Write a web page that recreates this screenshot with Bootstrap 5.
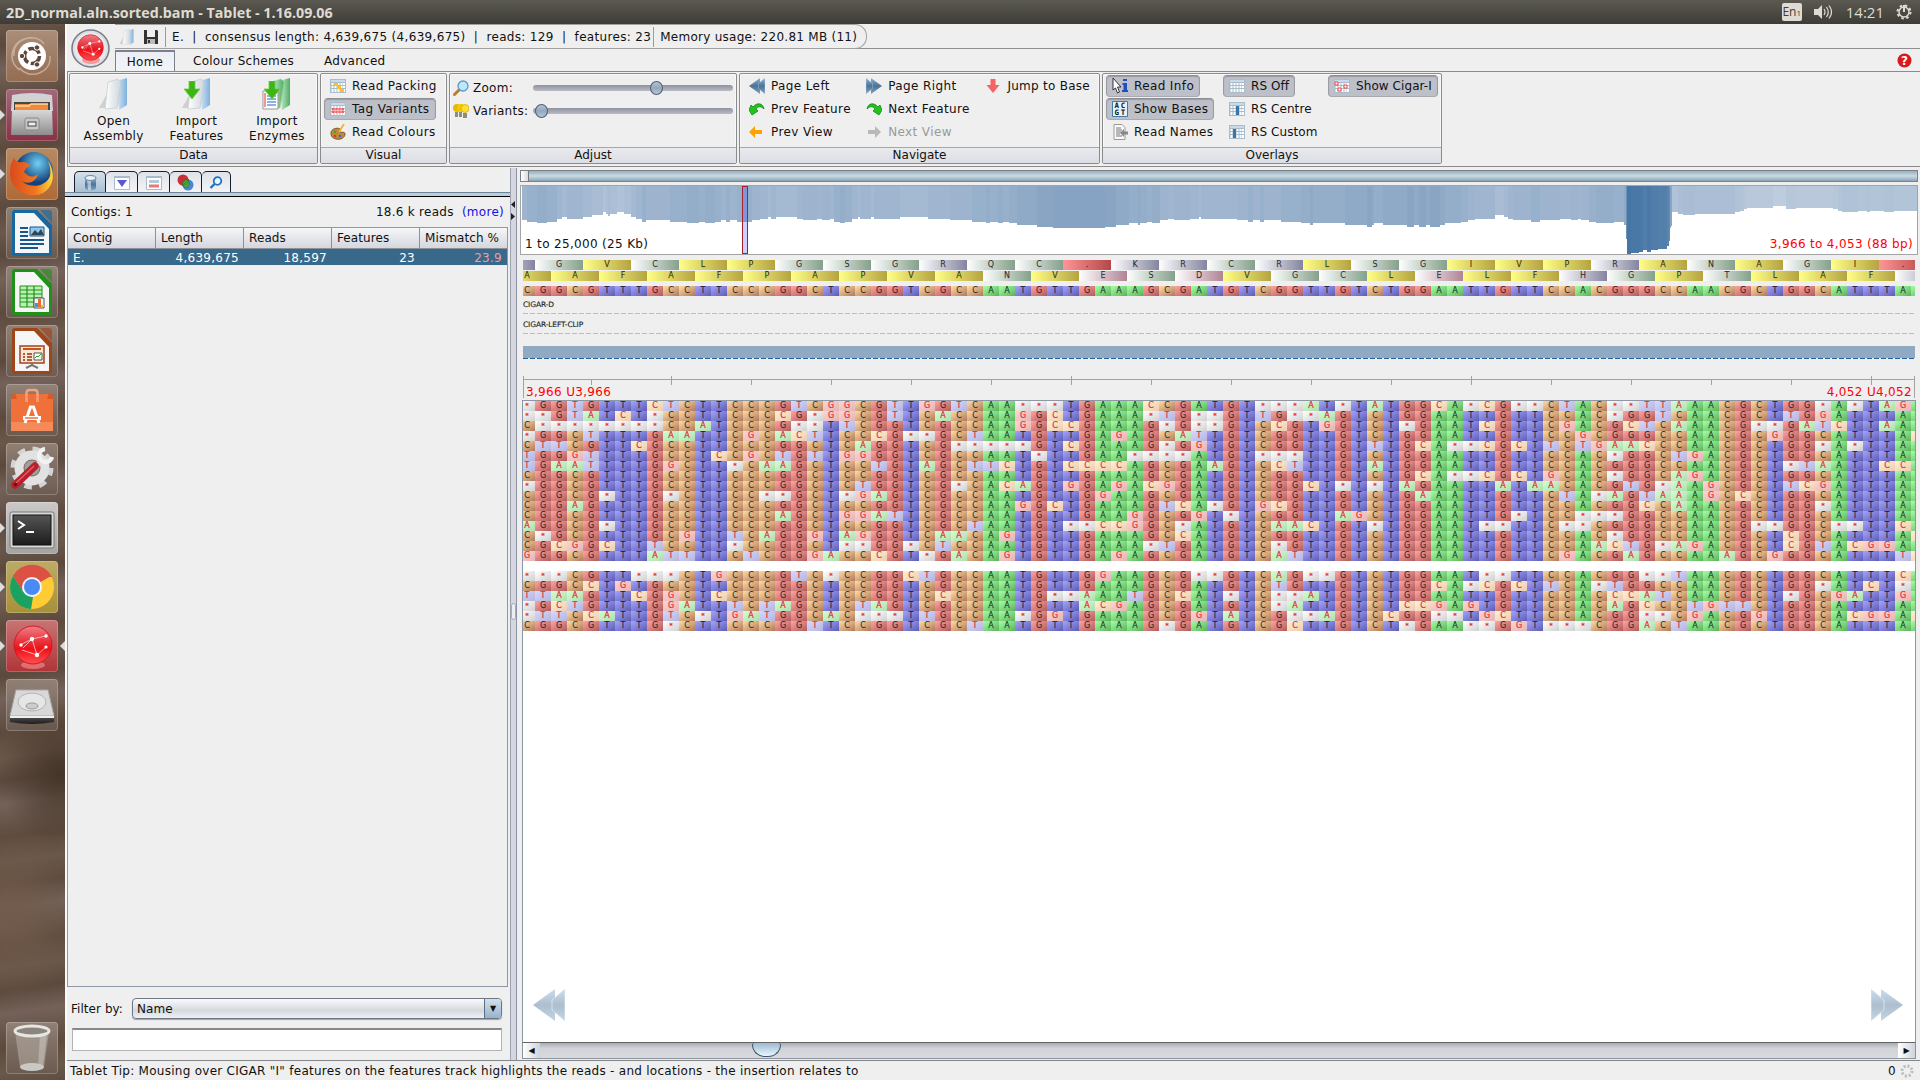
<!DOCTYPE html>
<html lang="en">
<head>
<meta charset="utf-8">
<title>2D_normal.aln.sorted.bam - Tablet - 1.16.09.06</title>
<link href="https://cdn.jsdelivr.net/npm/bootstrap@5.3.0/dist/css/bootstrap.min.css" rel="stylesheet">
<script src="https://cdn.jsdelivr.net/npm/bootstrap@5.3.0/dist/js/bootstrap.bundle.min.js"></script>
<style>
body{width:1920px;height:1080px;overflow:hidden;background:#efefef;color:#111;font:12px/16px "DejaVu Sans",sans-serif;letter-spacing:.27px}
svg{display:block;flex:none}
.topbar{height:24px;background:linear-gradient(#5b5951,#3d3c37);color:#dfdbd2;font:15px/24px "Open Sans",sans-serif;letter-spacing:0;padding:0 8px 0 6px}
.topbar b{font-size:15px;transform:scaleX(.951);transform-origin:left;white-space:pre}
.lang{width:20px;height:18px;background:#dfdbd2;color:#3c3b37;border-radius:2px;font-size:12px;line-height:17px}
.lang small{font-size:8px}
.launcher{width:65px;gap:7px;padding:6px 0 6px 6px;background:radial-gradient(ellipse 70px 90px at 10px 890px,#715b4b 0,transparent 100%),radial-gradient(ellipse 60px 70px at 60px 750px,#453528 0,transparent 100%),repeating-linear-gradient(172deg,#69574a 0,#5b493d 22px,#74625a 45px,#5d4a3d 78px,#6a584b 104px)}
.tile{width:52px;height:52px;border-radius:4px;position:relative;background:linear-gradient(#9a8b80cc,#6c5b50cc);box-shadow:inset 0 0 0 1px #ffffff38;flex:none}
.tile.t-brown{background:linear-gradient(#a98e7b,#956c50)}
.tile.t-wine{background:linear-gradient(#a2697a,#8a3046)}
.tile.t-orange{background:linear-gradient(#b88a62,#b06a35)}
.tile.t-grey{background:linear-gradient(#cbc8c8,#a5a2a2)}
.tile.t-olive{background:linear-gradient(#bdaa66,#a8903a)}
.tile.t-red{background:linear-gradient(#c87474,#b03438)}
.tile.run::before{content:"";position:absolute;left:-6px;top:21px;border:5px solid transparent;border-left-color:#ddd;border-right:0}
.tile.focus::after{content:"";position:absolute;right:-7px;top:21px;border:5px solid transparent;border-right-color:#ddd;border-left:0}
.app{border-left:2px solid #fafafa;min-width:0}
.quick{height:25px;border-bottom:1px solid #8f8f8f;margin-left:48px;white-space:pre}
.quick-inner{width:752px;height:25px;border:1px solid #a0a0a0;border-left:0;border-radius:0 12px 12px 0;padding:1px 0 0 4px}
.vsep{width:1px;height:20px;background:#9a9aa4}
.orb{left:71px;top:29px}
.tabs{height:23px;padding-left:48px;border-bottom:1px solid #8b8b8b}
.tab-home{width:60px;height:21px;border:1px solid #7d808c;border-bottom:0;background:linear-gradient(#eceff5,#f3f4f8);border-top-width:2px;line-height:20px}
.tab-o{line-height:20px;height:20px}
.ribbon{height:95px;border:1px solid #8b8b8b;border-top:0;border-right:0;padding:1px 0 2px 1px;gap:2px}
.grp{height:91px;border:1px solid #8b8b8b;border-radius:2px;box-shadow:inset 0 0 0 1px #f8f8f8}
.grp-name{height:16px;border-top:1px solid #a5a7ad;background:linear-gradient(#e9eaee,#dcdee4);line-height:14px;text-align:center;letter-spacing:0}
.cols{flex:1;padding:1px 3px 0}
.tb{height:22px;margin-bottom:1px;padding:0 5px 0 5px;border:1px solid transparent;border-radius:4px;display:flex;align-items:center;gap:6px;white-space:nowrap;width:max-content;letter-spacing:.38px}
.tb.snug{letter-spacing:.08px}
.tb.on{background:#bdc0c9;border-color:#8e8f96 #9b9ca3 #a9aab0;box-shadow:inset 0 1px 1px #999ba2}
.big{width:83px;line-height:15px;text-align:center}
.big svg{margin:4px auto 4px}
.sl{width:200px;height:6px;flex:none;border-radius:3px;background:linear-gradient(#8f929c,#b9bcc6);position:relative}
.sl::after{content:"";position:absolute;top:-4px;left:var(--p);width:13px;height:14px;border-radius:50%;border:1px solid #4f5d70;background:linear-gradient(#b4c3d4,#93a7bd 50%,#b6c8da)}
.leftp{width:443px}
.ltabs{height:24px;padding:3px 0 0 7px}
.ltab{width:32px;height:22px;border:1px solid #16202c;border-bottom:0;border-radius:5px 5px 0 0;background:linear-gradient(#dfe2e8,#f5f5f7)}
.ltab.on{background:linear-gradient(#d4dfe9,#a7bed2)}
.ltab+.ltab{border-left:0}
.stripe{height:5px;background:#b8cfe2;border-top:1px solid #6f8396;border-bottom:1px solid #000}
.tbl{width:441px;height:760px;border:1px solid #8f98a6;background:#efefef}
.tr1{height:21px;background:linear-gradient(#f6f6f8,#d4d7de);border-bottom:1px solid #8d9096;line-height:20px;letter-spacing:.1px}
.tr1>div{width:88px;padding-left:5px;border-right:1px solid #8d9096;white-space:nowrap}
.tr2{height:16px;background:#39698a;color:#fff;line-height:18px}
.tr2>div{width:88px;padding:0 5px;text-align:right}
.combo{width:370px;height:21px;border:1px solid #6e7784;border-radius:4px;background:linear-gradient(#fafafb,#d5d9df 60%,#eef1f4);box-shadow:0 1px 1px #8fa3b8}
.combo-a{width:17px;border-left:1px solid #5a6f85;border-radius:0 3px 3px 0;background:linear-gradient(#d3e0ec,#98b2ca);font-size:8px}
.inp{width:430px;height:23px;border:1px solid #b4b4b4;border-top:2px solid #888;background:#fff}
.split{width:7px;background:#d5d6df;border-left:1px solid #9ea3b2;border-right:1px solid #8c93a3;position:relative}
.rightp{flex:1;min-width:0;padding-top:2px}
.strip{width:1398px;height:12px;margin-left:3px;border:1px solid #7e8089;background:linear-gradient(#9aaebb,#c8dce6 50%,#8ca3b3)}
.strip div{width:8px;height:10px;background:linear-gradient(90deg,#fff,#ddd);border-right:1px solid #777}
.ovw{width:1398px;height:70px;border:1px solid #a4a4a4;margin:3px 0 0 3px;background:#fff;position:relative;letter-spacing:.33px}
.win{left:221px;top:0;width:6px;height:68px;border:1px solid #a8202c;background:#5050ff48}
.red{color:#f00;letter-spacing:.33px}
.tracks{margin-left:6px;width:1392px;overflow:hidden}
.line-r{display:flex;width:1600px;height:10px}
.base,.am{width:16px;height:10px;flex:none;text-align:center;font:8px/10px "DejaVu Sans",sans-serif;letter-spacing:0;color:#000b;-webkit-text-stroke:.25px #0007}
.am{width:48px}
.bG{background:linear-gradient(to bottom right,#ffa4a4,#b05c5c)}
.bC{background:linear-gradient(to bottom right,#ffdca8,#b07a58)}
.bT{background:linear-gradient(to bottom right,#a4a4ff,#5c5cb2)}
.bA{background:linear-gradient(to bottom right,#a4ffa4,#5cb25c)}
.mG{background:linear-gradient(to bottom right,#ffd4d4,#e4b4b4)}
.mC{background:linear-gradient(to bottom right,#fff0d8,#ecccb0)}
.mT{background:linear-gradient(to bottom right,#d6d6ff,#b6b6dc)}
.mA{background:linear-gradient(to bottom right,#d4ffd4,#b0dcb0)}
.mX{background:linear-gradient(to bottom right,#fff,#d0d0d0)}
.mG,.mC,.mT,.mA,.mX{color:#f02828;-webkit-text-stroke:.2px #f02828}
.mX{font-size:7px;color:#c8283c}
.aY{background:linear-gradient(to right,#ffff88,#b5a440)}
.aG{background:linear-gradient(to right,#fff,#84a08a)}
.aB{background:linear-gradient(to right,#fff,#8484a0)}
.aP{background:linear-gradient(to right,#fff,#b08494)}
.aR{background:linear-gradient(to right,#ff9494,#b44848)}
.tag8{font:7.5px/12px "DejaVu Sans",sans-serif;letter-spacing:-.12px;color:#222;-webkit-text-stroke:.15px #222}
.dash{height:1px;background:repeating-linear-gradient(90deg,#bdbdbd 0 5px,transparent 5px 7px)}
.cig{height:13px;background:linear-gradient(#90aac4,#90aac4) 0 0/100% 12px no-repeat,repeating-linear-gradient(90deg,#2560a0 0 5px,#e8f2ff 5px 7px)}
.reads{margin-left:5px;width:1394px;height:642px;border:1px solid #8c96a4;border-bottom:0;background:#fff;position:relative}
.sb{margin-left:5px;width:1394px;height:17px;border:1px solid #8d939c;border-top-color:#666;background:linear-gradient(#a9acb2,#d0d3d8 35%,#d8dade)}
.sb-b{width:17px;background:linear-gradient(90deg,#fff,#cfd4da);font-size:8px;letter-spacing:0}
.sb-t{width:29px;height:14px;border:1px solid #3e566e;border-top:0;border-radius:3px 3px 15px 15px/2px 2px 14px 14px;background:linear-gradient(#9fb9cf,#e9f6ff)}
.status{height:20px;border-top:1px solid #85868a;padding:2px 6px 0 3px}
</style>
</head>
<body class="d-flex flex-column">
<svg width="0" height="0" class="position-absolute">
<defs>
<linearGradient id="gb" x2="0" y2="1"><stop stop-color="#8fb4d4"/><stop offset=".5" stop-color="#4b7396"/><stop offset="1" stop-color="#7ea3c2"/></linearGradient>
<linearGradient id="gw" x2="1" y2="0"><stop stop-color="#fff"/><stop offset="1" stop-color="#cfd6dc"/></linearGradient>
<linearGradient id="gbl" x2="1" y2="0"><stop stop-color="#dcecf8"/><stop offset="1" stop-color="#7fb0dc"/></linearGradient>
<linearGradient id="ggr" x2="1" y2="0"><stop stop-color="#d5f2d8"/><stop offset="1" stop-color="#4fae62"/></linearGradient>
<linearGradient id="gm" x2="0" y2="1"><stop stop-color="#d8d8d8"/><stop offset="1" stop-color="#8d8d8d"/></linearGradient>
<linearGradient id="gk" x2="0" y2="1"><stop stop-color="#555"/><stop offset="1" stop-color="#1c1c1c"/></linearGradient>
<linearGradient id="gr" x2="0" y2="1"><stop stop-color="#f08088"/><stop offset=".4" stop-color="#e8343c"/><stop offset=".6" stop-color="#f01018"/><stop offset="1" stop-color="#ff5050"/></linearGradient>
<radialGradient id="gff" cx=".6" cy=".3"><stop stop-color="#6fd0f4"/><stop offset="1" stop-color="#16427c"/></radialGradient>
<linearGradient id="gfo" x1="0" x2="1"><stop stop-color="#d94a1e"/><stop offset=".6" stop-color="#f2761e"/><stop offset="1" stop-color="#ffd83c"/></linearGradient>
<symbol id="rball" viewBox="0 0 40 40"><circle cx="20" cy="20" r="19" fill="url(#gr)" stroke="#d01820"/><g stroke="#ffc4c4" stroke-width="1" fill="none" opacity=".85"><path d="M7 20l12-6 14-3M19 14l5 16M19 14l-9 9M24 30l9-8M9 25l15 5"/></g><g fill="#fff"><circle cx="19" cy="14" r="2.200"/><circle cx="33" cy="11" r="1.700"/><circle cx="8" cy="20" r="1.700"/><circle cx="24" cy="30" r="2.200"/><circle cx="33" cy="22" r="1.600"/></g></symbol>
<symbol id="folder" viewBox="0 0 30 32"><path d="M0 30l8-14 2 14z" fill="#bbb" opacity=".6"/><path d="M17 3l11-3v27l-8 5z" fill="url(#gbl)"/><path d="M9 4l10-3 3 3-4 26-12 1z" fill="url(#gw)" stroke="#c4cacd" stroke-width=".7"/></symbol>
<symbol id="foldg" viewBox="0 0 30 32"><path d="M17 3l11-3v27l-8 5z" fill="url(#ggr)"/><path d="M9 4l10-3 3 3-4 26-10 1z" fill="url(#ggr)" stroke="#9fd0a5" stroke-width=".5"/></symbol>
<symbol id="garr" viewBox="0 0 16 18"><path d="M5 0h6v8h5l-8 10L0 8h5z" fill="#3db515" stroke="#6fce45" stroke-width=".8"/></symbol>
<symbol id="gridi" viewBox="0 0 16 14"><path d="M0 0h16v14H0z" fill="#a9bccb"/><path d="M1 1h14v2H1z" fill="#c9dae8"/><path d="M1.500 4h2v2h-2zM4.500 4h2v2h-2zM7.500 4h2v2h-2zM10.500 4h2v2h-2zM13 4h2v2h-2zM1.500 7h2v2h-2zM4.500 7h2v2h-2zM7.500 7h2v2h-2zM10.500 7h2v2h-2zM13 7h2v2h-2zM1.500 10h2v3h-2zM4.500 10h2v3h-2zM7.500 10h2v3h-2zM10.500 10h2v3h-2zM13 10h2v3h-2z" fill="#fff"/></symbol>
<symbol id="mag" viewBox="0 0 16 16"><path d="M1.500 14.500l5-5" stroke="#c27a2c" stroke-width="3" stroke-linecap="round"/><circle cx="10" cy="6" r="5" fill="#bfe6fb" stroke="#5a9cc8" stroke-width="1.300"/></symbol>
<symbol id="dl" viewBox="0 0 32 32"><path d="M22 0v32L0 16z" fill="url(#gb)"/><path d="M32 0v32L19 21V11z" fill="url(#gb)" stroke="#b8d0e4" stroke-width=".8"/></symbol>
<symbol id="curv" viewBox="0 0 16 14"><path d="M0 8l2-5 2 2c4-5 10-4 11 2-3-3-6-3-8 0l2 2-6 4z" fill="#22c41c" stroke="#0b8a18" stroke-width=".8"/></symbol>
<symbol id="arrl" viewBox="0 0 14 12"><path d="M0 6l6-6v4h7v4H6v4z" fill="currentColor"/></symbol>
<symbol id="doc" viewBox="0 0 40 46"><path d="M0 3a3 3 0 013-3h22l15 15v28a3 3 0 01-3 3H3a3 3 0 01-3-3z" fill="currentColor"/><path d="M28 0h9a3 3 0 013 3v10z" fill="currentColor" opacity=".65"/><path d="M3 3h19l15 16v24H3z" fill="#f6f6f6"/></symbol>
</defs>
</svg>

<header class="topbar d-flex align-items-center flex-none">
<b>2D_normal.aln.sorted.bam - Tablet - 1.16.09.06</b>
<div class="lang ms-auto text-center">En<small>1</small></div>
<svg style="margin-left:12px" width="18" height="14" viewBox="0 0 18 14"><path d="M0 4h4l4-4v14l-4-4H0z" fill="#dfdbd2"/><path d="M10 4q2 3 0 6M12.500 2q3.500 5 0 10M15 .5q5 6.500 0 13" fill="none" stroke="#dfdbd2" stroke-width="1.200"/></svg>
<span style="margin:0 12px 0 14px">14:21</span>
<svg width="16" height="16" viewBox="0 0 16 16" fill="none" stroke="#dfdbd2"><circle cx="8" cy="8" r="6.500" stroke-width="2" stroke-dasharray="2.500 2.600"/><circle cx="8" cy="8" r="5" stroke-width="1.500"/><path d="M8 1v7" stroke-width="2"/></svg>
</header>

<div class="d-flex flex-grow-1" style="min-height:0">
<nav class="launcher d-flex flex-column">
<div class="tile t-brown"><svg width="52" height="52"><g fill="none" stroke="#d5bfae" stroke-width="1.500" opacity=".7"><path d="M8 26C6 8 30 2 38 14M44 26c2 18-22 24-30 12M14 40C-2 30 8 6 26 8"/></g><circle cx="26" cy="26" r="14" fill="#fff"/><circle cx="26" cy="26" r="7.500" fill="none" stroke="#5d463c" stroke-width="3.500" stroke-dasharray="13 2.700"/><g fill="#5d463c" stroke="#fff"><circle cx="16" cy="26" r="2.700"/><circle cx="31" cy="17.500" r="2.700"/><circle cx="31" cy="34.500" r="2.700"/></g></svg></div>
<div class="tile t-wine run"><svg width="52" height="52"><path d="M6 6q20-4 40 0l1 16H5z" fill="#d2d2d2"/><path d="M8 13h36v9H8z" fill="#4a4644"/><path d="M9 15h33v7H9z" fill="#f08a3c"/><path d="M9 17h14l2-2h17" stroke="#ffd9a8" fill="none" stroke-width="1.500"/><path d="M6 21h40l1 25H5z" fill="url(#gm)"/><rect x="19" y="29" width="14" height="12" rx="2" fill="#c8c8c8" stroke="#888"/><rect x="22" y="33" width="8" height="4" fill="#eee" stroke="#444"/></svg></div>
<div class="tile t-orange run"><svg width="52" height="52"><circle cx="28" cy="23" r="19" fill="url(#gff)"/><path d="M8 10c2 4 5 5 9 4 4 0 6 2 7 4-3 1-5 3-6 6 4 4 8 7 14 2-2 8-10 11-16 7 8 8 24 6 28-5 1-5 0-10-2-15 8 11 6 26-5 32C22 52 4 42 4 25c0-6 1-11 4-15z" fill="url(#gfo)"/></svg></div>
<div class="tile"><svg width="52" height="52"><use href="#doc" x="6" y="2" width="40" height="48" color="#1868a0"/><g stroke="#14588c" stroke-width="1.800"><path d="M14 21h8M14 25h8M14 29h8M14 33h24M14 37h24M14 41h18"/></g><path d="M24 20h14v9H24z" fill="#8ec8ec" stroke="#14588c"/><path d="M25 28l4-5 3 3 3-4 3 6z" fill="#345"/></svg></div>
<div class="tile"><svg width="52" height="52"><use href="#doc" x="6" y="2" width="40" height="48" color="#20901a"/><path d="M14 20h22v21H14z" fill="#b9f2b0" stroke="#20901a"/><path d="M14 24h22M14 28h22M14 32h22M14 36h22M21 20v21M28 20v21" stroke="#20901a" stroke-width="1.200"/><path d="M28 32h10v10H28z" fill="#f4f4f4" stroke="#555"/><path d="M29 37h3v4h-3z" fill="#389ad0"/><path d="M32 33h3v8h-3z" fill="#e8702c"/><path d="M35 39h3v2h-3z" fill="#f0c020"/></svg></div>
<div class="tile"><svg width="52" height="52"><use href="#doc" x="6" y="2" width="40" height="48" color="#a0441a"/><path d="M14 21h24v17H14z" fill="#fde6d4" stroke="#a0441a" stroke-width="1.500"/><path d="M17 24h18" stroke="#c8541c" stroke-width="2"/><path d="M17 29h2M17 32h2M17 35h2M21 29h5M21 32h5M21 35h5" stroke="#8a3410" stroke-width="1.500"/><path d="M28 28h8v7h-8z" fill="#fff" stroke="#555"/><path d="M29 33l2-2 1 1 3-3" stroke="#20a030" fill="none"/><path d="M26 38v3m-6 2l6-3 6 3" stroke="#777" stroke-width="2" fill="none"/></svg></div>
<div class="tile"><svg width="52" height="52"><path d="M5 10h42v37H5z" fill="#f0703a"/><path d="M5 10l4-1 2 6h30l2-6 4 1v5H5z" fill="#d85a28"/><path d="M5 38h42v9H5z" fill="#f58a58"/><path d="M20.500 18V9q0-3 3-3h5q3 0 3 3v9" fill="none" stroke="#f5a07c" stroke-width="2.500"/><path d="M19 39l5.500-16h3L33 39" fill="none" stroke="#fff" stroke-width="3"/><path d="M17 34h18" stroke="#fff" stroke-width="4"/><path d="M19 34h13" stroke="#f0703a" stroke-width="1.500"/></svg></div>
<div class="tile"><svg width="52" height="52"><circle cx="26" cy="25" r="18" fill="none" stroke="#d4d4d4" stroke-width="7" stroke-dasharray="7.100 7.030"/><circle cx="26" cy="25" r="13" fill="none" stroke="#e2e2e2" stroke-width="9"/><circle cx="26" cy="25" r="7.500" fill="#a2a09e"/><path d="M30 23l8-8" stroke="#ddd" stroke-width="5"/><path d="M9 42l20-19" stroke="#b9202c" stroke-width="7.500" stroke-linecap="round"/><path d="M10 40l18-17" stroke="#e06068" stroke-width="1.500"/><path d="M39 6a6.500 6.500 0 107 8" stroke="#f2f2f2" stroke-width="4.500" fill="none"/><circle cx="9.500" cy="41.500" r="1.700" fill="#611"/></svg></div>
<div class="tile t-grey run"><svg width="52" height="52"><rect x="4" y="10" width="44" height="36" rx="2" fill="#d8d8d8" stroke="#777"/><rect x="7" y="13" width="38" height="30" fill="url(#gk)" stroke="#111"/><path d="M12 19l6 4-6 4" fill="none" stroke="#fff" stroke-width="2"/><path d="M20 30h8" stroke="#fff" stroke-width="2"/></svg></div>
<div class="tile t-olive run"><svg width="52" height="52"><circle cx="26" cy="26" r="22" fill="#fc3"/><path d="M26 26L7 15A22 22 0 0145 15z" fill="#dd5044"/><path d="M26 16h20a22 22 0 00-39-1l9 14z" fill="#dd5044"/><path d="M26 26L25 48A22 22 0 017 15l10 15z" fill="#1ba160"/><path d="M17 31a10 10 0 0010 5L25 48 15 40z" fill="#1ba160"/><circle cx="26" cy="26" r="10" fill="#f4f4f4"/><circle cx="26" cy="26" r="8" fill="#4a8af4"/></svg></div>
<div class="tile t-red run focus"><svg width="52" height="52"><ellipse cx="27" cy="45" rx="12" ry="4" fill="#ff9090" opacity=".6"/><use href="#rball" x="7" y="5" width="40" height="40"/></svg></div>
<div class="tile"><svg width="52" height="52"><path d="M10 11h32l6 26H4z" fill="#d8d8d8" stroke="#aaa"/><ellipse cx="26" cy="23" rx="14" ry="9" fill="#e6e6e6" stroke="#b5b5b5"/><ellipse cx="26" cy="27" rx="6" ry="3" fill="#ccc" stroke="#999"/><path d="M4 37h44v6q-22 4-44 0z" fill="url(#gk)"/><path d="M4 37h44v2H4z" fill="#eee"/></svg></div>
<div class="tile mt-auto"><svg width="52" height="52"><path d="M9 10h34l-5 35q-12 6-24 0z" fill="#b8b0a8" opacity=".55"/><path d="M34 12h7l-4 32-5 2z" fill="#fff" opacity=".25"/><ellipse cx="26" cy="45" rx="12" ry="4" fill="#c8c8c4"/><ellipse cx="26" cy="9" rx="17" ry="5" fill="#8b857e" stroke="#e6e6e2" stroke-width="3"/></svg></div>
</nav>

<main class="app flex-grow-1 d-flex flex-column">
<svg class="orb position-absolute" width="40" height="40" viewBox="0 0 40 40"><circle cx="19.500" cy="19.500" r="18.500" fill="#dcdde3" stroke="#777b84" stroke-width="1.500"/><circle cx="19.500" cy="19.500" r="16" fill="#e8e9ee"/><ellipse cx="20" cy="31" rx="9" ry="4" fill="#f49a9a"/><use href="#rball" x="6" y="5" width="27" height="27"/></svg>
<div class="quick"><div class="quick-inner d-flex align-items-center">
<svg width="16" height="16"><use href="#folder" width="16" height="16"/></svg>
<svg style="margin-left:8px" width="16" height="16"><path d="M1 1h13l1 1v13H1z" fill="#333"/><path d="M4 1h8v7H4z" fill="#eee"/><path d="M4 10h8v5H4z" fill="#bbb"/><path d="M5 11h2v3H5z" fill="#333"/></svg>
<div class="vsep" style="margin:0 6px 0 6px"></div><span style="letter-spacing:.32px">E.  |  consensus length: 4,639,675 (4,639,675)  |  reads: 129  |  features: 23</span><div class="vsep" style="margin:0 6px 0 2px"></div><span>Memory usage: 220.81 MB (11)</span>
</div></div>
<div class="tabs d-flex align-items-end">
<div class="tab-home text-center">Home</div><div class="tab-o" style="margin:0 30px 0 18px;letter-spacing:.27px">Colour Schemes</div><div class="tab-o">Advanced</div>
<svg class="ms-auto me-2" style="margin-bottom:3px" width="15" height="15"><circle cx="7.500" cy="7.500" r="7" fill="#d81a1a"/><text x="7.500" y="12" text-anchor="middle" font-size="12" font-weight="bold" fill="#fff" font-family="DejaVu Sans">?</text></svg>
</div>
<section class="ribbon d-flex">
<div class="grp d-flex flex-column" style="width:249px"><div class="cols d-flex" style="padding:0 0 0 2px">
<div class="big"><svg width="30" height="32"><use href="#folder" width="30" height="32"/></svg>Open<br>Assembly</div>
<div class="big"><svg width="30" height="32"><use href="#folder" width="30" height="32"/><use href="#garr" x="2" y="3" width="16" height="18"/></svg>Import<br>Features</div>
<div class="big" style="width:78px"><svg width="30" height="32"><use href="#foldg" width="30" height="32"/><path d="M1 13h15v18H1z" fill="#fff" stroke="#999"/><path d="M5 18h9M5 21h9M5 24h9M5 27h9" stroke="#2060d0"/><path d="M3 15v14" stroke="#e03030"/><use href="#garr" x="2" y="3" width="16" height="18"/></svg>Import<br>Enzymes</div>
</div><div class="grp-name">Data</div></div>
<div class="grp d-flex flex-column" style="width:127px"><div class="cols">
<div class="tb"><svg width="16" height="14"><use href="#gridi" width="16" height="14"/><path d="M4 4h4v3H4zM7 7h4v3H7zM10 10h4v3h-4z" fill="#ffc020"/></svg>Read Packing</div>
<div class="tb on"><svg width="16" height="14"><use href="#gridi" width="16" height="14"/><path d="M2 6h12v5H2z" fill="#f06464"/><path d="M2 8.500h12M5 6v5M8 6v5M11 6v5" stroke="#ffd0d0" stroke-width=".7"/></svg>Tag Variants</div>
<div class="tb"><svg width="16" height="16"><path d="M1 9c0-4 6-6 9-4 1 1-1 2 0 3s5-1 5 2c0 4-5 6-9 5s-5-3-5-6z" fill="#c08a3c" stroke="#7c5620"/><circle cx="5" cy="8" r="1.300" fill="#3a3"/><circle cx="5" cy="12" r="1.300" fill="#d33"/><circle cx="10" cy="12" r="1.300" fill="#36d"/><path d="M9 8l5-8" stroke="#f5b030" stroke-width="1.800"/></svg>Read Colours</div>
</div><div class="grp-name">Visual</div></div>
<div class="grp d-flex flex-column" style="width:288px"><div class="cols" style="padding-top:2px">
<div class="d-flex align-items-center" style="height:23px"><svg width="16" height="16"><use href="#mag" width="16" height="16"/></svg><span style="width:60px;margin-left:4px">Zoom:</span><div class="sl" style="--p:117px"></div></div>
<div class="d-flex align-items-center" style="height:23px"><svg width="16" height="16"><circle cx="4" cy="5" r="4" fill="#e8b800"/><circle cx="8" cy="5" r="4" fill="#f4c800"/><circle cx="12" cy="5.500" r="4" fill="#ffe030" stroke="#c89800" stroke-width=".6"/><path d="M2 9h3v5H2zM6 9h3v5H6zM10 10h4v5h-4z" fill="#8c8c80"/></svg><span style="width:60px;margin-left:4px">Variants:</span><div class="sl" style="--p:2px"></div></div>
</div><div class="grp-name">Adjust</div></div>
<div class="grp d-flex flex-column" style="width:361px"><div class="cols d-flex">
<div style="width:118px">
<div class="tb"><svg width="16" height="16"><use href="#dl" width="16" height="16"/></svg>Page Left</div>
<div class="tb"><svg width="16" height="14"><use href="#curv" width="16" height="14"/></svg>Prev Feature</div>
<div class="tb"><svg width="16" height="12" color="#ffa200"><use href="#arrl" width="14" height="12"/></svg>Prev View</div></div>
<div style="width:120px">
<div class="tb"><svg width="16" height="16"><use href="#dl" width="16" height="16" transform="matrix(-1 0 0 1 16 0)"/></svg>Page Right</div>
<div class="tb"><svg width="16" height="14"><use href="#curv" width="16" height="14" transform="matrix(-1 0 0 1 16 0)"/></svg>Next Feature</div>
<div class="tb" style="color:#999"><svg width="16" height="12" color="#b9b9b9"><use href="#arrl" width="14" height="12" transform="matrix(-1 0 0 1 15 0)"/></svg>Next View</div></div>
<div><div class="tb" style="letter-spacing:.27px"><svg width="16" height="14"><path d="M5.500 0h5v6h4L8 14 1.500 6h4z" fill="#f46464"/></svg>Jump to Base</div></div>
</div><div class="grp-name">Navigate</div></div>
<div class="grp d-flex flex-column" style="width:340px"><div class="cols d-flex">
<div style="width:117px">
<div class="tb on"><svg width="16" height="16"><path d="M1 0l8 9H5.500l2 5-2 1-2-5L1 12z" fill="#fff" stroke="#222" stroke-width=".9"/><path d="M11 1h4v2h-4zM10.500 5H15v7h1v2h-6v-2h1.500V7h-1z" fill="#1d50c0"/></svg>Read Info</div>
<div class="tb on" style="letter-spacing:.25px"><svg width="16" height="16"><path d="M.5.500h15v15H.500z" fill="#e6f2fa" stroke="#3d7ca6"/><g font-family="DejaVu Sans Mono" font-size="7.500" font-weight="bold" fill="#111"><text x="2.500" y="7.200" textLength="11">AC</text><text x="2.500" y="14" textLength="11">GT</text></g></svg>Show Bases</div>
<div class="tb"><svg width="16" height="16"><path d="M2 .500h8l3 3v12H2z" fill="#fafafa" stroke="#999"/><path d="M4 4h5M4 6h6M4 8h5M4 10h4M4 12h6" stroke="#777"/><path d="M8 9l4-4v2.500h4v3h-4V13z" fill="#888"/></svg>Read Names</div></div>
<div style="width:105px">
<div class="tb on snug"><svg width="16" height="14"><use href="#gridi" width="16" height="14"/></svg>RS Off</div>
<div class="tb snug"><svg width="16" height="14"><use href="#gridi" width="16" height="14"/><path d="M7 4h3v9H7z" fill="#3d74a4"/></svg>RS Centre</div>
<div class="tb snug"><svg width="16" height="14"><use href="#gridi" width="16" height="14"/><path d="M4 4h3v9H4z" fill="#3d74a4"/></svg>RS Custom</div></div>
<div><div class="tb on snug"><svg width="16" height="16"><use href="#gridi" y="1" width="16" height="14"/><path d="M1 4h3v3H1zM4 10h3v3H4zM10 7h3v3h-3z" fill="#fff" stroke="#f04848"/></svg>Show Cigar-I</div></div>
</div><div class="grp-name">Overlays</div></div>
</section>

<div class="d-flex flex-grow-1" style="min-height:0;padding-top:1px">
<section class="leftp d-flex flex-column">
<div class="ltabs d-flex">
<div class="ltab on d-flex align-items-center justify-content-center"><svg width="13" height="16"><path d="M1 3v10c0 3 11 3 11 0V3z" fill="url(#gb)"/><path d="M3 4h4v11H4z" fill="#fff" opacity=".5"/><ellipse cx="6.500" cy="3" rx="5.500" ry="2.500" fill="#e6eef6" stroke="#68809c"/></svg></div>
<div class="ltab d-flex align-items-center justify-content-center"><svg width="16" height="14"><path d="M.5.500h15v13H.500z" fill="#fff" stroke="#a9bccb"/><path d="M0 0h16v2H0z" fill="#a9bccb"/><path d="M3 4h10l-5 7z" fill="#5858d8"/></svg></div>
<div class="ltab d-flex align-items-center justify-content-center"><svg width="16" height="14"><path d="M.5.500h15v13H.500z" fill="#fff" stroke="#a9bccb"/><path d="M0 0h16v2H0z" fill="#a9bccb"/><path d="M3 4h10v3H3z" fill="#b4c8dc"/><path d="M3 8.500h10v3H3z" fill="#e87878"/></svg></div>
<div class="ltab d-flex align-items-center justify-content-center"><svg width="17" height="17"><circle cx="6" cy="6" r="5.500" fill="#c83038"/><circle cx="11" cy="11" r="5.500" fill="#4a86d0"/><path d="M11.500 5.500a5.500 5.500 0 01-6 6 5.500 5.500 0 016-6zM11.500 5.500q2 4-1 8-3 1-5-2z" fill="#4cae44" stroke="#2a6a28" stroke-width=".6"/></svg></div>
<div class="ltab d-flex align-items-center justify-content-center" style="width:29px"><svg width="14" height="14"><circle cx="8.500" cy="5" r="3.800" fill="#eaf6ff" stroke="#1f74c8" stroke-width="1.800"/><path d="M1.500 12l4-4" stroke="#1f74c8" stroke-width="2.400"/></svg></div>
</div>
<div class="stripe flex-shrink-0" style="margin-left:-2px"></div>
<div class="d-flex justify-content-between flex-shrink-0" style="height:30px;padding:7px 6px 0 4px"><span style="letter-spacing:.1px">Contigs: 1</span><span>18.6 k reads&nbsp; <span style="color:#1410e8">(more)</span></span></div>
<div class="tbl flex-shrink-0">
<div class="tr1 d-flex"><div>Contig</div><div>Length</div><div>Reads</div><div>Features</div><div class="border-end-0" style="width:87px">Mismatch %</div></div>
<div class="tr2 d-flex"><div class="text-start">E.</div><div>4,639,675</div><div>18,597</div><div>23</div><div style="width:87px;color:#e8a0a0">23.9</div></div>
</div>
<div class="d-flex align-items-center" style="padding:11px 0 0 4px;letter-spacing:.05px"><span style="width:61px">Filter by:</span><div class="combo d-flex"><span class="flex-grow-1" style="padding:2px 4px">Name</span><div class="combo-a d-flex align-items-center justify-content-center">▼</div></div></div>
<div class="inp" style="margin:9px 0 0 5px"></div>
</section>
<div class="split"><svg class="position-absolute" style="left:0;top:33px" width="5" height="20"><path d="M4 0v7L0 3.500zM0 12v7l4-3.500z" fill="#222"/></svg><svg class="position-absolute" style="left:0;top:435px" width="5" height="18"><rect x=".5" y=".5" width="4" height="16" rx="2" fill="#eceef4" stroke="#a5a9b8"/></svg></div>
<section class="rightp">
<div class="strip"><div></div></div>
<div class="ovw"><svg id="cov" width="1396" height="68" shape-rendering="crispEdges"></svg><div class="win position-absolute"></div>
<span class="position-absolute" style="left:4px;bottom:2px">1 to 25,000 (25 Kb)</span><span class="position-absolute red" style="right:4px;bottom:2px">3,966 to 4,053 (88 bp)</span></div>
<div class="tracks" style="padding-top:5px">
<div class="line-r" id="am1" style="margin-left:-36px"></div>
<div class="line-r" id="am2" style="margin:1px 0 5px -20px"></div>
<div class="line-r" id="refseq" style="margin-left:-4px"></div>
<div class="tag8" style="margin-top:3px;height:14px">CIGAR-D</div><div class="dash"></div>
<div class="tag8" style="margin-top:5px;height:14px">CIGAR-LEFT-CLIP</div><div class="dash"></div>
<div class="cig" style="margin-top:12px"></div>
<svg id="ruler" width="1392" height="24" style="margin-top:17px" shape-rendering="crispEdges"></svg>
</div>
<div class="d-flex justify-content-between red" style="margin:-16px 8px 0 9px;height:16px"><span>3,966 U3,966</span><span>4,052 U4,052</span></div>
<div class="reads" id="reads"><div id="rd" style="width:1392px;overflow:hidden"></div>
<svg class="position-absolute" style="left:10px;top:588px;opacity:.45" width="33" height="32"><use href="#dl" width="32" height="32"/></svg>
<svg class="position-absolute" style="left:1348px;top:588px;opacity:.45" width="33" height="32"><use href="#dl" width="32" height="32" transform="matrix(-1 0 0 1 32 0)"/></svg>
</div>
<div class="sb d-flex"><div class="sb-b d-flex align-items-center justify-content-center">◀</div><div style="width:212px"></div><div class="sb-t"></div><div class="sb-b ms-auto d-flex align-items-center justify-content-center">▶</div></div>
</section>
</div>
<footer class="status d-flex">
<span>Tablet Tip: Mousing over CIGAR "I" features on the features track highlights the reads - and locations - the insertion relates to</span>
<span class="ms-auto">0</span><svg class="ms-1" style="margin-top:1px" width="14" height="14"><circle cx="7" cy="7" r="5" fill="none" stroke="#bbb" stroke-width="3" stroke-dasharray="2 1.900"/></svg>
</footer>
</main>
</div>

<script>
const REF="CGGCGTTTGCCTTCCCGGCTCCGGTCGCCAATGTTGAAAGCGATGTCGGTTGTCTGGAATTGTTCCACGGGCCAACGCTGGCATTTAA";
const READS=`*GGTGTTTCTCTTCCCGTCGGC GTTGGTCAA***TGAAACCGAT GT***AT*TATGGCA*CG**CT AC**TTAAACGCTGG*A*TAGA
**GTATCT*CCTTCCCCG*GGC GTTCACCAAGGCTGAAA*TG** GTTG**AGTCTGGAATTGTTCC AC*GGTCAACGCTTGGATTTAA
C********CCATCCCG**TTC GGTCGCCAAGGCCGAAAG*G** GTCCGTGGTCT*GAATCGTTCG ACGCTCAAACG**GATCTTAAA
*GGCTTTTGAATTCGCACTTCC CG**GCTAATGTTGAGAGCATT GTCGGTTGTCTGGAATTGTTCC GCGGGCCAACGCGGGCATTTAC
CTTCGTTCGCCTTCCCGGCTCA GGTCG*****GTCGAAAG*GGT GTCGGTTGTTTGCA**CGCTTC TGAACCCAACGCTGG*A*TTAA
TGGGTTTTGCCTCCGCTGTTGG GGTCGCCAAT*TTGAA****AT GT***TTGTCTGGAATTGTTCC AC*GGCTGACGCTGGCATTTAA
TGAATTTTGGCTT*CAAGCTCC TGTAGCTTCTGTCCCCAGCGAA GTCCTTTGTATGGAATTGTTCC ACGGGCCAACGCT*TAATTCCA
CGGCGTTTGCCTTCCCGGCTCC GGTCGCCAATGTTGAAAGCGAT GTCGGTTGTCTGCA**CGCTGC AC*GGCAGACGCTGGCATTTAA
*GGCGTTTGCCTTCCCGGCTCT GGTCG*CACAGTGGAGACGGAT GTCGGCT*T*TAGAATTATAAC ACGTG*AAGCGCTTCGATTTAA
CGGCG*TTG*CTTCC**GCT*G AGTCGCCAATGTTGGAAGCGAT GTCGGTTGTCTGAAATTGTTCT A*AGTAAAGCCCTGGCATTTAA
CGGAGTTTGCCTTCCCGGCTCC GGTCGCCAAGGCTGAAAGTCA* GTGCGTTGTCTGGAATTGTTCC ACGGCCAAACGCTGG*ATTTAA
CGGCGTTTGCCTTCCCAGCTGG ATTCGCCAATGTTGAAGGCGGT *TCGGTTAGCTGGAATTG*TCC ***GGCCAACGCTGGCATTTAA
AGGCG*TTGCCTTCCCGGCTCC GGTCGCTAATGT**CCGGC*AT GTCAACTGT*TGGAAT**TTC* *CGGGCCAACG**GGC**TTCA
C*GCGTTTGCGTTTCAGGGTAG GGTCAACAGTGTTGAAAGCCAT GTCGGTTGTCTGGAATTGTTCC AC*GGCCAACGCTCGCATTTAC
CGCGGCTTTCCTT*CCGGCT** GG*CTCCAATGTTGAAA*TGAT GTC*GTTGTCTGGAATTGTTCC AACTG*AGACGCTCGTACGGAA
GGGCGTTTATTTTCTCGGGACC CGT*GACAGTGTTGAGAGCGAT GTCATTTGTCTGGAATTGTTCG ACGAGCCAAAGCGGGCATTTTC

***CGTT***CTGCCCGTC*CC GGCTGCCAATGTTGGAAGCG** GTCAG**GTCTGGAAT**TTCC ACGG**TAACGCTGGCATTTCA
CGGCCTGTGCCTTCCCGGCTCC GGTCGCCAATGTTGAAAGCGAT GTCTGTTGTCTGGCA*CGCTTC A*TGGCCAACGCTGG*ATCT*A
TTAAGTTCGGCTCCCCGGCTCC GGTCCCCAATG**AAATGCCAT *TC**ATGTCTGGAATTGTTCC ACCCATCAACGCT*GCGATTGA
*GCTGTTTGGATTTCTAGCTCT AGTCGCCAATGTTACGAGCGAT GTC*ATTGTCTCCGAGTGTTCC ACAGCCCTGTTCTGGCATTTAA
*TTCCATTGTC*TGATGGCAC* **TTGCCAA*GGTGAAAGCGGT ATCG**AGTCCGG**TGCTTCC ACGG**CGACGGTGGCACGGAC
CGGCGTTTG*CTTCCCGGTTCC GGTCGCTAATGTTGAAAG*GAT GTCGCTTGTCT*GAA**GGT** *CGGACTAACGCTGGCATTTAA`.split("\n");
// A base that agrees with the consensus gets the solid scheme, a variant the washed one.
// Only a sliver of column 87 is on screen, so it carries no letter.
const cell=(c,ok,i)=>`<span class="base ${c=='*'?'mX':(ok?'b':'m')+c}">${i==87?'':c}</span>`;
document.getElementById('refseq').innerHTML=[...REF].map((c,i)=>cell(c,true,i)).join('');
document.getElementById('rd').innerHTML=READS.map(r=>'<div class="line-r" style="margin-left:-4px">'+[...r.replace(/ /g,'')].map((c,i)=>cell(c,c==REF[i],i)).join('')+'</div>').join('');
const amc=c=>'AVLIFPMW'.includes(c)?'aY':'KRH'.includes(c)?'aB':'DE'.includes(c)?'aP':c=='.'?'aR':'aG';
const am=(id,s,hide)=>document.getElementById(id).innerHTML=[...s].map((c,i)=>`<span class="am ${amc(c)}">${i==hide?'':c}</span>`).join('');
am('am1','RGVCLPGSGRQC.KRCRLSGIVPRANAGI.',0);
am('am2','AAFAFPAPVANVESDVGCLELFHGPTLAFK',29);
// Coverage profile: start x and lower edge of each run
const P="522,220 527,222 537,223 547,222 557,219 562,217 567,219 583,217 592,215 603,212 606,214 608,216 610,214 617,212 624,214 631,217 636,219 642,222 646,220 670,222 687,223 699,222 705,223 715,222 721,220 726,222 730,220 737,222 752,220 760,219 768,217 771,219 776,217 797,219 803,220 817,219 822,220 830,219 834,222 840,223 845,222 852,219 858,217 860,219 871,217 874,219 900,217 928,219 950,220 972,222 986,223 990,222 998,223 1003,222 1009,223 1017,225 1037,227 1053,228 1105,227 1116,225 1129,223 1138,225 1140,223 1147,222 1152,223 1160,220 1168,219 1174,220 1190,219 1199,217 1201,219 1237,220 1248,222 1253,220 1260,222 1264,220 1281,222 1301,223 1310,225 1313,223 1345,225 1367,227 1372,225 1374,223 1383,225 1407,227 1414,225 1419,227 1426,225 1430,227 1440,225 1445,223 1461,222 1468,220 1475,219 1495,215 1504,217 1508,219 1513,220 1531,222 1540,220 1560,219 1571,220 1578,219 1581,220 1589,222 1596,223 1614,222 1624,225 1626,239 1627,254 1631,253 1639,252 1643,250 1647,252 1651,250 1658,249 1667,246 1669,241 1670,228 1671,226 1672,212 1678,214 1683,215 1695,214 1735,212 1740,211 1744,209 1747,208 1773,206 1786,209 1796,208 1833,209 1838,211 1842,212 1858,211 1867,212 1870,211 1884,212 1894,211 1917,211".split(' ').map(p=>p.split(',').map(Number));
const stops=[[20,190,205,221],[27,173,192,214],[33,160,181,208],[36,151,176,203],[42,135,163,195],[68,70,118,165]];
function shade(h){for(let i=1;i<stops.length;i++)if(h<=stops[i][0]){const a=stops[i-1],b=stops[i],t=(h-a[0])/(b[0]-a[0]);return'rgb('+[1,2,3].map(k=>Math.round(a[k]+(b[k]-a[k])*t))+')'}return'#4676a5'}
document.getElementById('cov').innerHTML=P.slice(0,-1).map((p,i)=>`<rect x="${p[0]-521}" y="0" width="${P[i+1][0]-p[0]}" height="${p[1]-186}" fill="${shade(p[1]-186)}"/>`).join('');
let r='<path d="M0 3.500h1392M.5 0v22M1391.500 0v22';
for(let x=68,i=0;x<1392;x+=80,i++)r+=`M${x+.5} ${i%5==1?0:3}v${i%5==1?9:6}`;
document.getElementById('ruler').innerHTML=r+'" stroke="#a2a2a6" fill="none"/>';
</script>
</body>
</html>
